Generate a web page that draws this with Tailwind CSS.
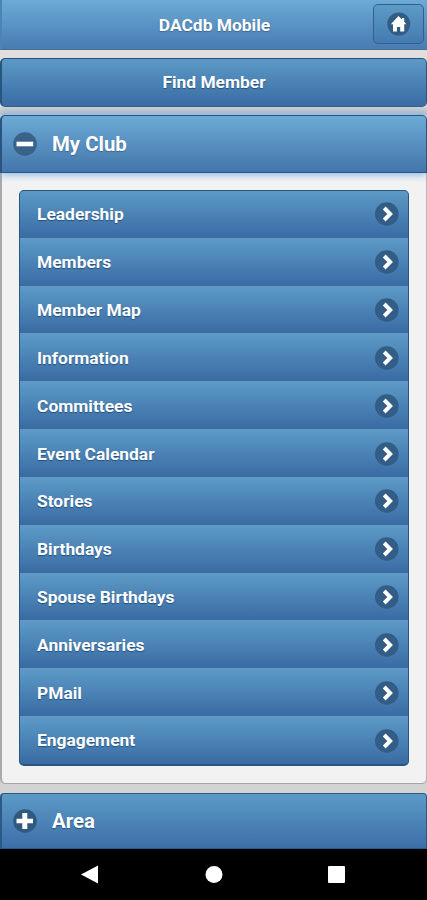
<!DOCTYPE html>
<html lang="en">

<head>
  <meta charset="UTF-8" />
  <meta name="viewport" content="width=device-width, initial-scale=1.0" />
  <title>DACdb Mobile</title>
  <script src="https://cdn.jsdelivr.net/npm/@tailwindcss/browser@4"></script>
</head>

<body class="h-[900px] overflow-hidden bg-[#d3d3d3] font-['Roboto',sans-serif] font-bold text-white">
  <svg class="hidden">
    <symbol id="arrow" viewBox="0 0 24 24">
      <circle cx="11.8" cy="12" r="11.8" fill="#315d86" />
      <path d="M9.2 6 L15.2 12 L9.2 18" fill="none" stroke="#fff" stroke-width="3.9" />
    </symbol>
  </svg>

  <div class="flex h-full flex-col">
    <!-- Header -->
    <header class="relative flex h-[50px] shrink-0 items-center justify-center border-b border-l-2 border-b-[#456f9b] border-l-[#4b83b7] bg-linear-to-b from-[#6cabd5] to-[#487bb2]">
      <h1 class="pt-px text-[17.4px] text-shadow-[0_1px_1px_#3e6790]">DACdb Mobile</h1>
      <a class="absolute top-1 right-[3px] flex h-10 w-[51px] items-center justify-center rounded-[5px] border border-[#2f608e] bg-linear-to-b from-[#5d9bc7] to-[#447bb0]">
        <svg class="h-6 w-6" viewBox="0 0 24 24">
          <circle cx="11.8" cy="12" r="11.5" fill="#315d82" />
          <path d="M11.5 4 L3.8 12.2 H6 V19.6 H10 V15 H13.2 V19.6 H17.2 V12.2 H19.4 L17.2 9.8 V6 H15 V7.6 Z" fill="#fff" />
        </svg>
      </a>
    </header>

    <!-- Find Member -->
    <div class="h-[57px] shrink-0 bg-[#e2dede] pt-2">
      <a class="flex h-[49px] items-center justify-center rounded-[5px] border border-l-2 border-[#26557f] bg-linear-to-b from-[#5c9ac6] to-[#3a6ba4] text-[17.4px] text-shadow-[0_1px_1px_#254f7c]">Find Member</a>
    </div>

    <!-- My Club -->
    <section class="mt-2 h-[669px] shrink-0 rounded-b-[5px] border-b border-b-[#a5a5a5] shadow-[0_-5px_5px_#b1bfd0]">
      <h2 class="relative flex h-[58px] items-center rounded-t-[5px] border border-l-2 border-[#28547f] bg-linear-to-b from-[#6cabd5] to-[#4475ab] pl-[11px] text-[20.4px] text-shadow-[0_1px_1px_#3e6790] shadow-[0_1px_9px_#75aee5]">
        <svg class="mr-[15px] h-6 w-6" viewBox="0 0 24 24">
          <circle cx="12" cy="12" r="11.8" fill="#386287" />
          <path d="M3.5 9.7 H20.2 V14.3 H3.5 Z" fill="#fff" />
        </svg>
        My Club
      </h2>
      <div class="h-[610px] rounded-b-[5px] border-r border-l-2 border-r-[#b5b5b5] border-l-[#a9a9a9] bg-[#f2f2f2] px-[17px] pt-[17px]">
        <ul class="flex h-[576px] flex-col overflow-hidden rounded-[5px] border border-b-2 border-[#275681] bg-[#275681] text-[17.4px] text-shadow-[0_1px_1px_#254f7c]">
          <li class="flex flex-1 items-center justify-between bg-linear-to-b from-[#5c9ac6] to-[#3a6ba4] pr-[9px] pl-[17px]">Leadership<svg class="h-6 w-6"><use href="#arrow" /></svg></li>
          <li class="flex flex-1 items-center justify-between border-t border-[#6699c3] bg-linear-to-b from-[#5c9ac6] to-[#3a6ba4] pr-[9px] pl-[17px]">Members<svg class="h-6 w-6"><use href="#arrow" /></svg></li>
          <li class="flex flex-1 items-center justify-between border-t border-[#6699c3] bg-linear-to-b from-[#5c9ac6] to-[#3a6ba4] pr-[9px] pl-[17px]">Member Map<svg class="h-6 w-6"><use href="#arrow" /></svg></li>
          <li class="flex flex-1 items-center justify-between border-t border-[#6699c3] bg-linear-to-b from-[#5c9ac6] to-[#3a6ba4] pr-[9px] pl-[17px]">Information<svg class="h-6 w-6"><use href="#arrow" /></svg></li>
          <li class="flex flex-1 items-center justify-between border-t border-[#6699c3] bg-linear-to-b from-[#5c9ac6] to-[#3a6ba4] pr-[9px] pl-[17px]">Committees<svg class="h-6 w-6"><use href="#arrow" /></svg></li>
          <li class="flex flex-1 items-center justify-between border-t border-[#6699c3] bg-linear-to-b from-[#5c9ac6] to-[#3a6ba4] pr-[9px] pl-[17px]">Event Calendar<svg class="h-6 w-6"><use href="#arrow" /></svg></li>
          <li class="flex flex-1 items-center justify-between border-t border-[#6699c3] bg-linear-to-b from-[#5c9ac6] to-[#3a6ba4] pr-[9px] pl-[17px]">Stories<svg class="h-6 w-6"><use href="#arrow" /></svg></li>
          <li class="flex flex-1 items-center justify-between border-t border-[#6699c3] bg-linear-to-b from-[#5c9ac6] to-[#3a6ba4] pr-[9px] pl-[17px]">Birthdays<svg class="h-6 w-6"><use href="#arrow" /></svg></li>
          <li class="flex flex-1 items-center justify-between border-t border-[#6699c3] bg-linear-to-b from-[#5c9ac6] to-[#3a6ba4] pr-[9px] pl-[17px]">Spouse Birthdays<svg class="h-6 w-6"><use href="#arrow" /></svg></li>
          <li class="flex flex-1 items-center justify-between border-t border-[#6699c3] bg-linear-to-b from-[#5c9ac6] to-[#3a6ba4] pr-[9px] pl-[17px]">Anniversaries<svg class="h-6 w-6"><use href="#arrow" /></svg></li>
          <li class="flex flex-1 items-center justify-between border-t border-[#6699c3] bg-linear-to-b from-[#5c9ac6] to-[#3a6ba4] pr-[9px] pl-[17px]">PMail<svg class="h-6 w-6"><use href="#arrow" /></svg></li>
          <li class="flex flex-1 items-center justify-between border-t border-[#6699c3] bg-linear-to-b from-[#5c9ac6] to-[#3a6ba4] pr-[9px] pl-[17px]">Engagement<svg class="h-6 w-6"><use href="#arrow" /></svg></li>
        </ul>
      </div>
    </section>

    <!-- Area -->
    <h2 class="mt-[9px] flex h-14 shrink-0 items-center rounded-t-[4px] border border-l-2 border-[#2b5a86] bg-linear-to-b from-[#5c9ac6] to-[#3d6fa8] pl-[11px] text-[20.4px] text-shadow-[0_1px_1px_#254f7c]">
      <svg class="mr-[15px] h-6 w-6" viewBox="0 0 24 24">
        <circle cx="12" cy="12" r="11.8" fill="#30597f" />
        <path d="M9.3 4 H14.3 V9.7 H20 V14.3 H14.3 V20 H9.3 V14.3 H3.5 V9.7 H9.3 Z" fill="#fff" />
      </svg>
      Area
    </h2>

    <!-- Android navigation bar -->
    <nav class="flex-1 bg-black">
      <svg class="h-[51px] w-[427px]" viewBox="0 0 427 51" fill="#fff">
        <path d="M81 25.5 L98 16.5 V34.5 Z" />
        <circle cx="214" cy="25.5" r="8.5" />
        <rect x="328" y="17" width="17" height="17" rx="1" />
      </svg>
    </nav>
  </div>
</body>

</html>
